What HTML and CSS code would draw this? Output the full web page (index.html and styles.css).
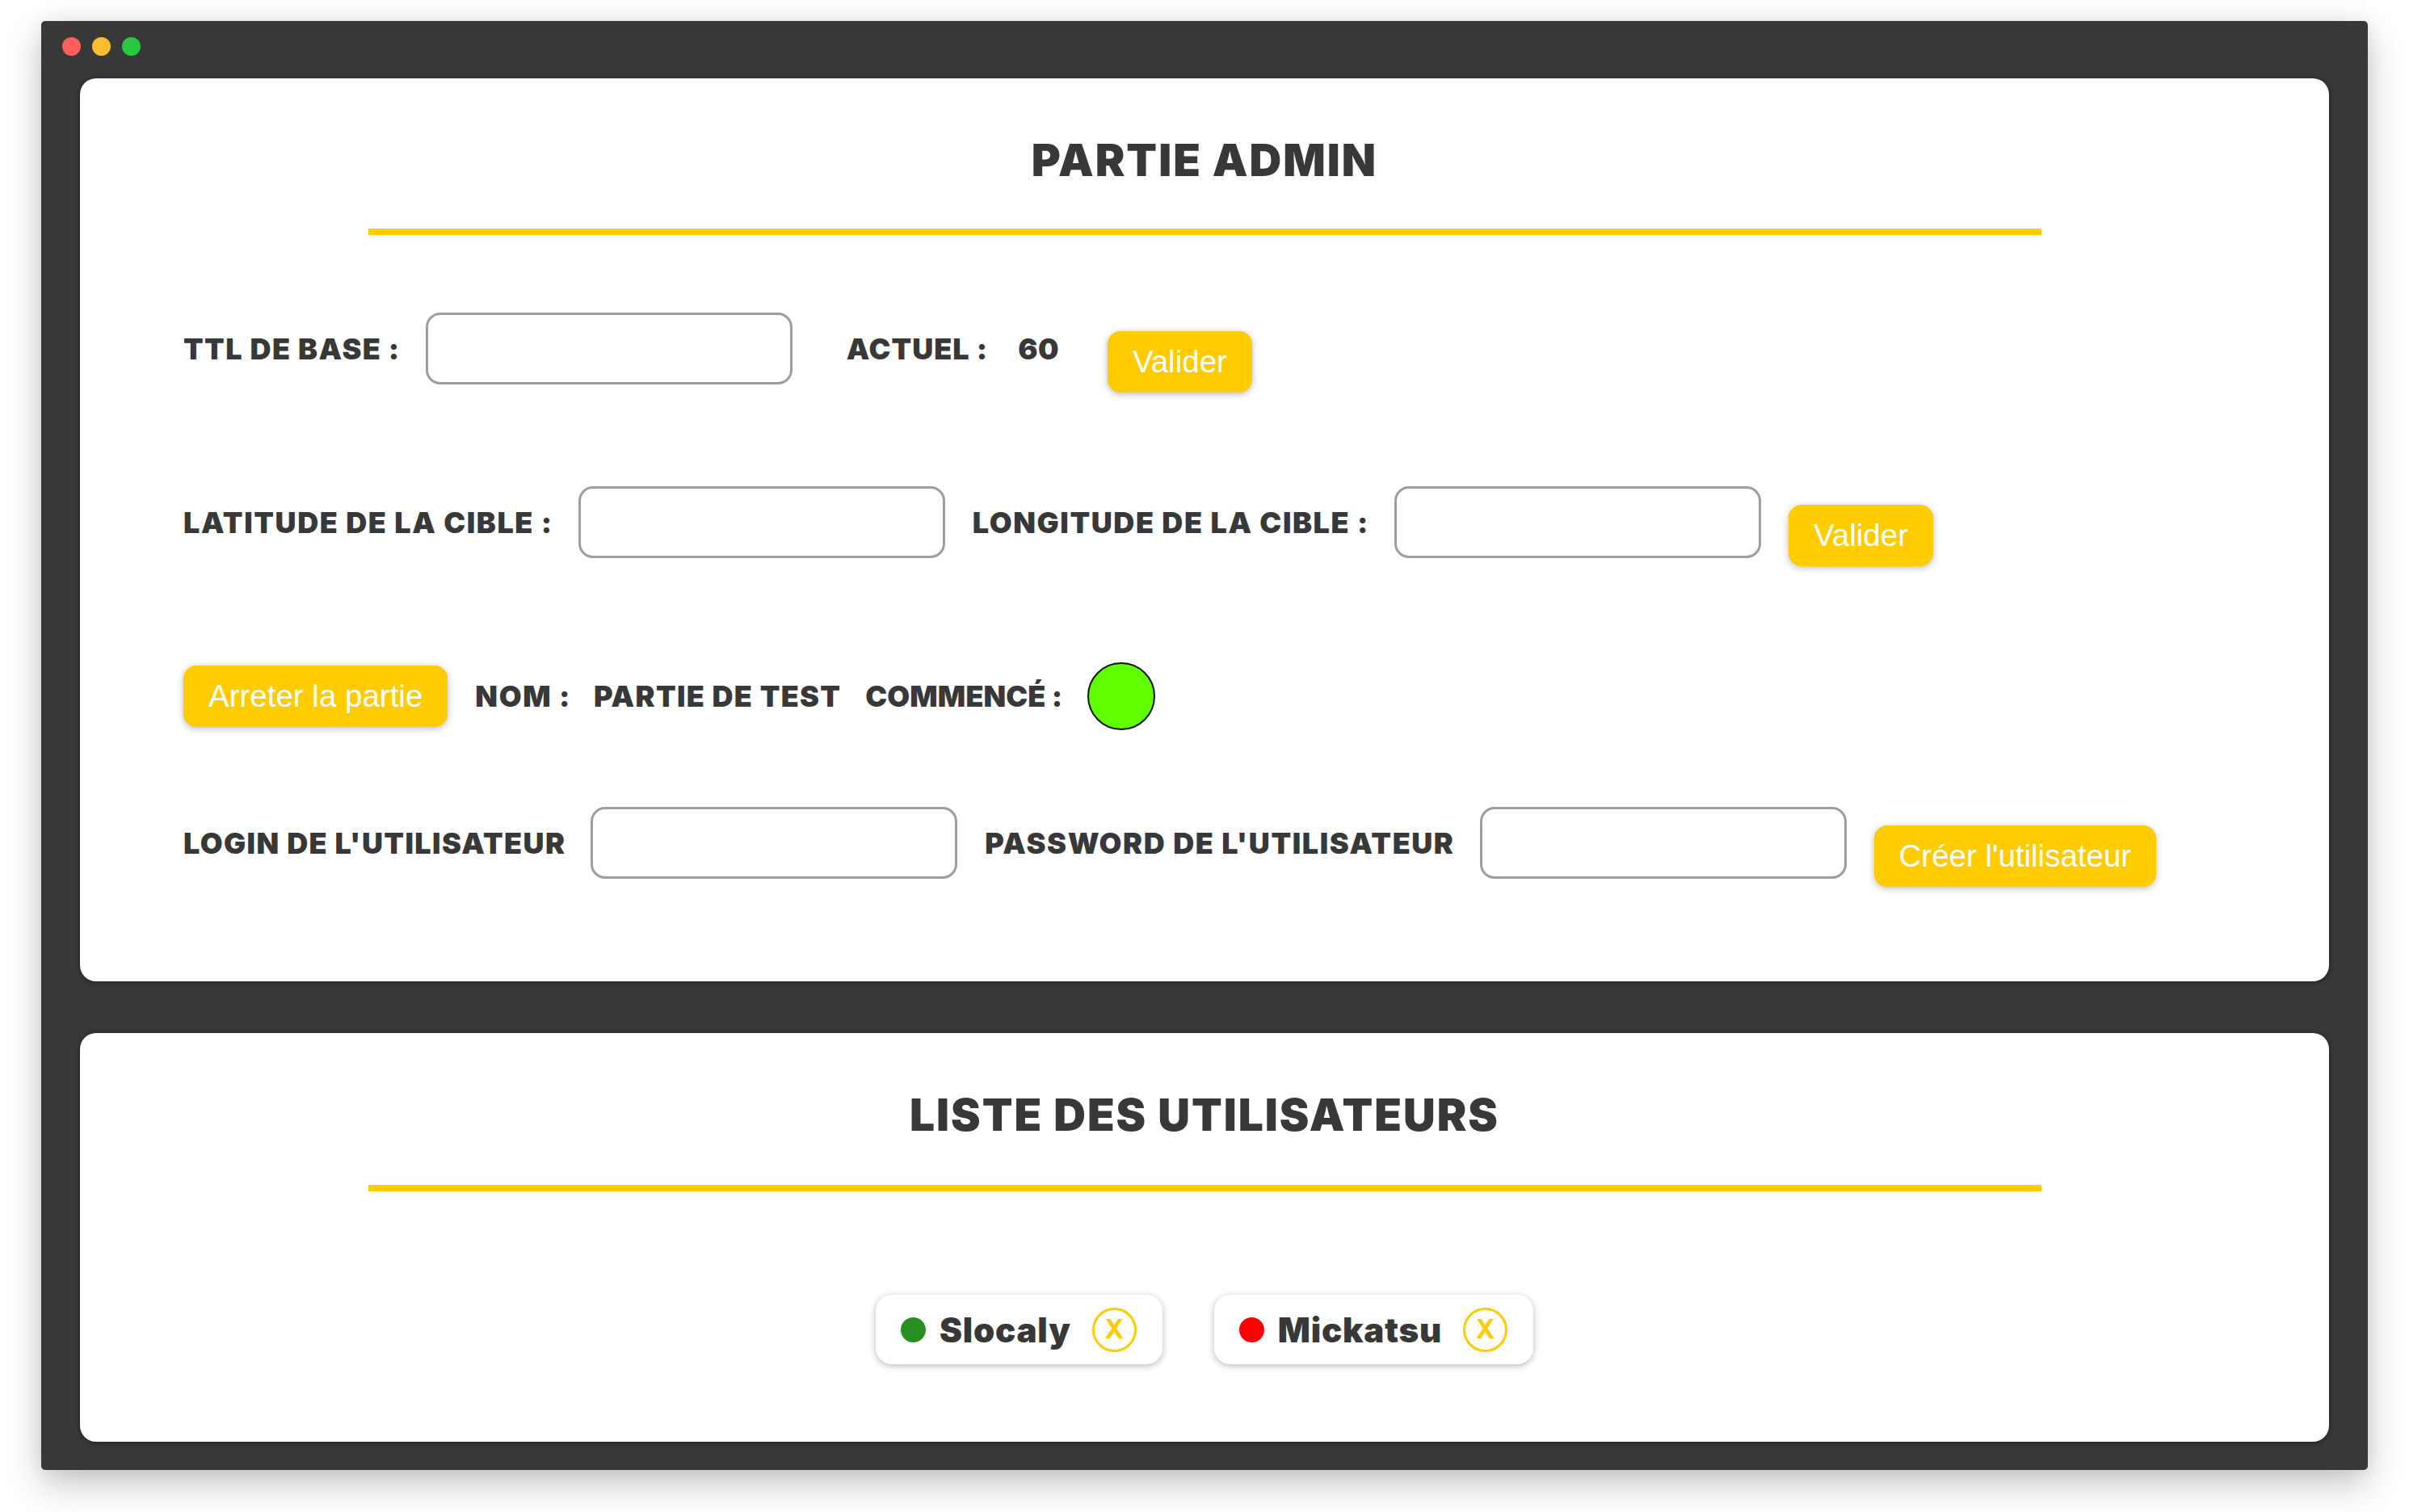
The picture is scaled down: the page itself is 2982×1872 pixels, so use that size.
FILE: index.html
```html
<!DOCTYPE html>
<html lang="fr">
<head>
<meta charset="utf-8">
<title>Partie admin</title>
<link rel="stylesheet" href="styles.css">
</head>
<body>
<div class="window">
  <div class="titlebar">
    <span class="light red"></span>
    <span class="light yellow"></span>
    <span class="light green"></span>
  </div>
  <div class="content">
    <section class="card card-admin">
      <h1 class="card-title">PARTIE ADMIN</h1>
      <div class="rule"></div>

      <div class="row row-ttl">
        <span class="label ttl">TTL DE BASE :</span>
        <input class="field" type="text">
        <span class="label actuel">ACTUEL :</span>
        <span class="label value">60</span>
        <button class="btn btn-ttl">Valider</button>
      </div>

      <div class="row row-coords">
        <span class="label">LATITUDE DE LA CIBLE :</span>
        <input class="field" type="text">
        <span class="label">LONGITUDE DE LA CIBLE :</span>
        <input class="field" type="text">
        <button class="btn btn-low">Valider</button>
      </div>

      <div class="row row-game">
        <button class="btn">Arreter la partie</button>
        <span class="label game-key">NOM :</span>
        <span class="label game-name">PARTIE DE TEST</span>
        <span class="label started">COMMENCÉ :</span>
        <span class="status"></span>
      </div>

      <div class="row row-user">
        <span class="label login">LOGIN DE L'UTILISATEUR</span>
        <input class="field" type="text">
        <span class="label">PASSWORD DE L'UTILISATEUR</span>
        <input class="field" type="password">
        <button class="btn btn-low">Créer l'utilisateur</button>
      </div>
    </section>

    <section class="card card-users">
      <h1 class="card-title">LISTE DES UTILISATEURS</h1>
      <div class="rule"></div>
      <div class="chips">
        <div class="chip">
          <span class="dot online"></span>
          <span class="chip-name">Slocaly</span>
          <span class="remove">X</span>
        </div>
        <div class="chip">
          <span class="dot offline"></span>
          <span class="chip-name">Mickatsu</span>
          <span class="remove">X</span>
        </div>
      </div>
    </section>
  </div>
</div>
</body>
</html>
```
FILE: styles.css
```css
* { box-sizing: border-box; }

html, body {
  margin: 0;
  padding: 0;
  background: #ffffff;
}

body {
  font-family: "Inter", "Liberation Sans", sans-serif;
  color: #383838;
  padding: 26px 0 0 51px;
  height: 1872px;
  overflow: hidden;
}

.window {
  width: 2880px;
  height: 1794px;
  background: #383838;
  border-radius: 5px;
  box-shadow: 0 18px 45px rgba(0, 0, 0, 0.22), 0 0 24px rgba(0, 0, 0, 0.07);
  display: flex;
  flex-direction: column;
}

.titlebar {
  height: 71px;
  flex: none;
  display: flex;
  align-items: flex-start;
  gap: 14px;
  padding: 20px 0 0 26px;
}

.light {
  width: 23px;
  height: 23px;
  border-radius: 50%;
}
.light.red { background: #ff5f57; }
.light.yellow { background: #febc2e; }
.light.green { background: #28c840; }

.content {
  flex: 1;
  display: flex;
  flex-direction: column;
  gap: 64px;
  padding: 0 48px 35px;
}

.card {
  background: #ffffff;
  border-radius: 20px;
  box-shadow: 0 1px 6px rgba(0, 0, 0, 0.45);
  padding-top: 72px;
}

.card-admin { height: 1118px; }
.card-users { height: 506px; }

.card-title {
  margin: 0;
  font-size: 55px;
  line-height: 58px;
  font-weight: 900;
  letter-spacing: 2px;
  text-align: center;
  color: #383838;
}

.rule {
  width: 2071px;
  height: 8px;
  margin: 56px auto 0;
  background: #ffcc00;
}
.card-users .rule { margin-top: 58px; }

.row {
  height: 89px;
  display: flex;
  align-items: center;
  gap: 31px;
  padding-left: 128px;
}
.row-ttl { margin-top: 96px; }
.row-coords { margin-top: 126px; }
.row-game { margin-top: 126px; }
.row-user { margin-top: 93px; }

.label {
  font-size: 36px;
  font-weight: 900;
  letter-spacing: 1.6px;
  white-space: nowrap;
  color: #383838;
}
.ttl { letter-spacing: 1.4px; }
.actuel { margin-left: 33px; letter-spacing: 1px; }
.value { margin-left: 6px; letter-spacing: 0.4px; }
.game-key { margin-left: 3px; }
.game-name { margin-left: -3px; letter-spacing: 1.3px; }
.started { margin-left: -1px; letter-spacing: 0.1px; }
.login { letter-spacing: 1.4px; }

.field {
  width: 454px;
  height: 89px;
  margin-right: 3px;
  border: 3px solid #9e9e9e;
  border-radius: 18px;
  background: #ffffff;
  outline: none;
  flex: none;
}

.btn {
  height: 76px;
  padding: 0 31px;
  border: none;
  border-radius: 16px;
  background: #ffcc00;
  color: #ffffff;
  font-family: "Liberation Sans", Arial, sans-serif;
  font-size: 38.5px;
  line-height: 76px;
  box-shadow: 0 2px 8px rgba(0, 0, 0, 0.28);
  white-space: nowrap;
  flex: none;
}
.btn-low { margin-top: 32px; }
.btn-ttl { margin-top: 32px; margin-left: 29px; }

.status {
  width: 84px;
  height: 84px;
  border-radius: 50%;
  background: #60ff00;
  border: 2px solid #111111;
  flex: none;
}

.chips {
  margin-top: 128px;
  display: flex;
  justify-content: center;
  gap: 64px;
}

.chip {
  height: 86px;
  display: flex;
  align-items: center;
  padding: 0 32px 0 31px;
  background: #ffffff;
  border-radius: 20px;
  box-shadow: 0 2px 8px rgba(0, 0, 0, 0.28);
}

.dot {
  width: 31px;
  height: 31px;
  border-radius: 50%;
  flex: none;
}
.dot.online { background: #2a8f22; }
.dot.offline { background: #ff0000; }

.chip-name {
  margin-left: 17px;
  font-size: 42px;
  font-weight: 900;
  letter-spacing: 0.8px;
  color: #383838;
}

.remove {
  margin-left: 26px;
  width: 55px;
  height: 55px;
  border: 3px solid #ffcc00;
  border-radius: 50%;
  display: flex;
  align-items: center;
  justify-content: center;
  color: #ffcc00;
  font-size: 32px;
  font-weight: 700;
  line-height: 1;
  flex: none;
}
```
